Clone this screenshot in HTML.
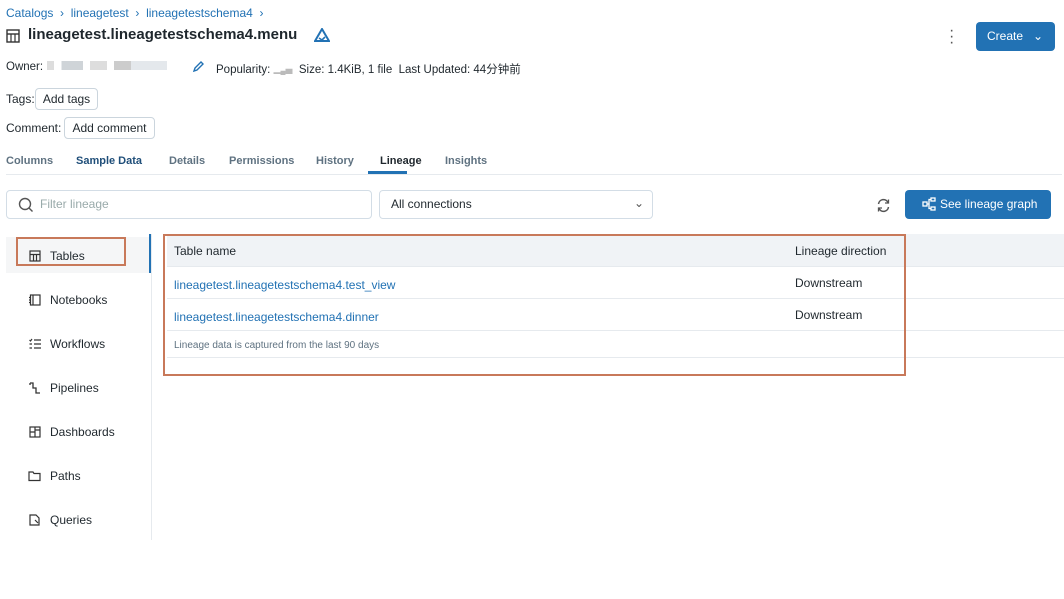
<!DOCTYPE html>
<html><head><style>
*{box-sizing:border-box;margin:0;padding:0}
body{width:1064px;height:599px;background:#fff;font-family:"Liberation Sans","Noto Sans CJK SC",sans-serif;color:#1f272d;position:relative;overflow:hidden;font-size:12px}
.a{position:absolute;white-space:nowrap}
.lk{color:#2272b4}
.btn{position:absolute;border:1px solid #cbd5dd;border-radius:4px;background:#fff;font-size:12px;text-align:center}
.tab{position:absolute;top:155px;font-size:11px;color:#5f7281;font-weight:bold}
.side{position:absolute;left:50px;font-size:12px}
.row{position:absolute;left:167px;width:897px;border-bottom:1px solid #e6eaee}
</style></head><body>
<div class="a lk" style="left:6px;top:6px;font-size:12px">Catalogs &nbsp;›&nbsp; lineagetest &nbsp;›&nbsp; lineagetestschema4 &nbsp;›</div>
<svg class="a" style="left:6px;top:29px" width="14" height="14" viewBox="0 0 14 14"><rect x="1" y="1" width="12" height="12" fill="none" stroke="#333" stroke-width="1.4"/><line x1="1" y1="5" x2="13" y2="5" stroke="#333" stroke-width="1.4"/><line x1="5" y1="5" x2="5" y2="13" stroke="#333" stroke-width="1.2"/><line x1="9" y1="5" x2="9" y2="13" stroke="#333" stroke-width="1.2"/></svg>
<div class="a" style="left:28px;top:26px;font-size:15px;font-weight:bold">lineagetest.lineagetestschema4.menu</div>
<svg class="a" style="left:314px;top:28px" width="16" height="15" viewBox="0 0 16 15"><path d="M8 1L15 13H1Z" fill="none" stroke="#2272b4" stroke-width="2"/><path d="M5 10L8 12L11 9" fill="none" stroke="#2272b4" stroke-width="1.6"/></svg>
<div class="a" style="left:6px;top:61px;font-size:11.5px">Owner:<span style="display:inline-block;width:120px;height:9px;margin-left:4px;background:linear-gradient(90deg,#ddd 0 6%,#fff 6% 12%,#cfd4d8 12% 30%,#fff 30% 36%,#ddd 36% 50%,#fff 50% 56%,#ccc 56% 70%,#e4e8ec 70% 100%)"></span></div>
<svg class="a" style="left:192px;top:60px" width="13" height="13" viewBox="0 0 13 13"><path d="M2 11L3 8L9 2L11 4L5 10Z" fill="none" stroke="#2272b4" stroke-width="1.4"/></svg>
<div class="a" style="left:216px;top:61px;font-size:11.5px">Popularity: <span style="color:#bbb;font-size:7px">▂▄▆</span> &nbsp;Size: 1.4KiB, 1 file &nbsp;Last Updated: 44分钟前</div>
<div class="a" style="left:6px;top:92px">Tags:</div>
<div class="btn" style="left:35px;top:88px;width:63px;height:22px;line-height:20px">Add tags</div>
<div class="a" style="left:6px;top:121px">Comment:</div>
<div class="btn" style="left:64px;top:117px;width:91px;height:22px;line-height:20px">Add comment</div>
<div class="tab" style="left:6px">Columns</div>
<div class="tab" style="left:76px;color:#1f4e79">Sample Data</div>
<div class="tab" style="left:169px">Details</div>
<div class="tab" style="left:229px">Permissions</div>
<div class="tab" style="left:316px">History</div>
<div class="tab" style="left:380px;color:#1f272d">Lineage</div>
<div class="tab" style="left:445px">Insights</div>
<div class="a" style="left:368px;top:171px;width:39px;height:3px;background:#2272b4"></div>
<div class="a" style="left:6px;top:174px;width:1056px;height:1px;background:#e6eaee"></div>
<div class="a" style="left:949px;top:28px;font-size:16px;color:#555;line-height:6px">·<br>·<br>·</div>
<div class="a" style="left:976px;top:22px;width:79px;height:29px;background:#2272b4;border-radius:4px;color:#fff;font-size:12px;line-height:29px;padding-left:11px">Create &nbsp;&nbsp;⌄</div>
<div class="btn" style="left:6px;top:190px;width:366px;height:29px;text-align:left;line-height:27px;padding-left:33px;color:#9aa;border-color:#d3dde6">Filter lineage</div>
<svg class="a" style="left:18px;top:197px" width="16" height="16" viewBox="0 0 16 16"><circle cx="7" cy="7" r="5.5" fill="none" stroke="#555" stroke-width="1.4"/><line x1="11" y1="11" x2="14.5" y2="14.5" stroke="#555" stroke-width="1.4"/></svg>
<div class="btn" style="left:379px;top:190px;width:274px;height:29px;text-align:left;line-height:27px;padding-left:11px;border-color:#d3dde6">All connections</div>
<div class="a" style="left:634px;top:196px;color:#555;font-size:12px">⌄</div>
<svg class="a" style="left:876px;top:198px" width="15" height="15" viewBox="0 0 15 15"><path d="M2.5 6A5 5 0 0 1 12 4.5M12.5 9A5 5 0 0 1 3 10.5" fill="none" stroke="#555" stroke-width="1.5"/><path d="M12.5 1.5V5H9M2.5 13.5V10H6" fill="none" stroke="#555" stroke-width="1.3"/></svg>
<div class="a" style="left:905px;top:190px;width:146px;height:29px;background:#2272b4;border-radius:4px;color:#fff;line-height:29px;padding-left:35px">See lineage graph</div>
<svg class="a" style="left:922px;top:197px" width="14" height="14" viewBox="0 0 14 14" fill="none" stroke="#fff" stroke-width="1.3"><rect x="1" y="5" width="4" height="4"/><rect x="9" y="1" width="4" height="3"/><rect x="9" y="10" width="4" height="3"/><path d="M5 7H7V2.5H9M7 7V11.5H9"/></svg>
<div class="a" style="left:6px;top:237px;width:144px;height:36px;background:#f5f6f7"></div>
<div class="a" style="left:16px;top:237px;width:110px;height:29px;border:2px solid #c8795a"></div>
<div class="a" style="left:149px;top:234px;width:3px;height:39px;background:#2272b4"></div>
<div class="a" style="left:151px;top:234px;width:1px;height:306px;background:#e6eaee"></div>
<svg class="a" style="left:29px;top:250px" width="12" height="12" viewBox="0 0 12 12" fill="none" stroke="#333" stroke-width="1.2"><rect x="1" y="1" width="10" height="10"/><path d="M1 4.5H11M4.5 4.5V11M7.5 4.5V11"/></svg>
<div class="side" style="top:249px">Tables</div>
<svg class="a" style="left:29px;top:294px" width="12" height="12" viewBox="0 0 12 12" fill="none" stroke="#333" stroke-width="1.2"><rect x="1.5" y="1" width="9.5" height="10"/><path d="M4 1V11M0 3.5H2M0 6H2M0 8.5H2"/></svg>
<div class="side" style="top:293px">Notebooks</div>
<svg class="a" style="left:29px;top:338px" width="12" height="12" viewBox="0 0 12 12" fill="none" stroke="#333" stroke-width="1.2"><path d="M5 2H12M5 6H12M5 10H12M0.5 2L1.5 3L3 1M0.5 6H3M0.5 10H3"/></svg>
<div class="side" style="top:337px">Workflows</div>
<svg class="a" style="left:29px;top:382px" width="12" height="12" viewBox="0 0 12 12" fill="none" stroke="#333" stroke-width="1.3"><path d="M1 1H4V6H7V11H11M1 1V3M4 1V3"/></svg>
<div class="side" style="top:381px">Pipelines</div>
<svg class="a" style="left:29px;top:426px" width="12" height="12" viewBox="0 0 12 12" fill="none" stroke="#333" stroke-width="1.2"><rect x="1" y="1" width="10" height="10"/><path d="M6 1V11M1 6H6M6 4H11"/></svg>
<div class="side" style="top:425px">Dashboards</div>
<svg class="a" style="left:28px;top:470px" width="13" height="12" viewBox="0 0 13 12" fill="none" stroke="#333" stroke-width="1.2"><path d="M1 2H5L6 3.5H12V10.5H1Z"/></svg>
<div class="side" style="top:469px">Paths</div>
<svg class="a" style="left:29px;top:514px" width="12" height="12" viewBox="0 0 12 12" fill="none" stroke="#333" stroke-width="1.2"><path d="M1 1H7L10 4V11H1Z"/><path d="M6 6L9 9"/></svg>
<div class="side" style="top:513px">Queries</div>
<div class="row" style="top:234px;height:33px;background:#f0f3f6"></div>
<div class="row" style="top:267px;height:32px"></div>
<div class="row" style="top:299px;height:32px"></div>
<div class="row" style="top:331px;height:27px"></div>
<div class="a" style="left:174px;top:244px">Table name</div>
<div class="a" style="left:795px;top:244px">Lineage direction</div>
<div class="a lk" style="left:174px;top:278px">lineagetest.lineagetestschema4.test_view</div>
<div class="a" style="left:795px;top:276px">Downstream</div>
<div class="a lk" style="left:174px;top:310px">lineagetest.lineagetestschema4.dinner</div>
<div class="a" style="left:795px;top:308px">Downstream</div>
<div class="a" style="left:174px;top:340px;font-size:10px;color:#5f7281">Lineage data is captured from the last 90 days</div>
<div class="a" style="left:163px;top:234px;width:743px;height:142px;border:2px solid #c8795a"></div>
</body></html>
